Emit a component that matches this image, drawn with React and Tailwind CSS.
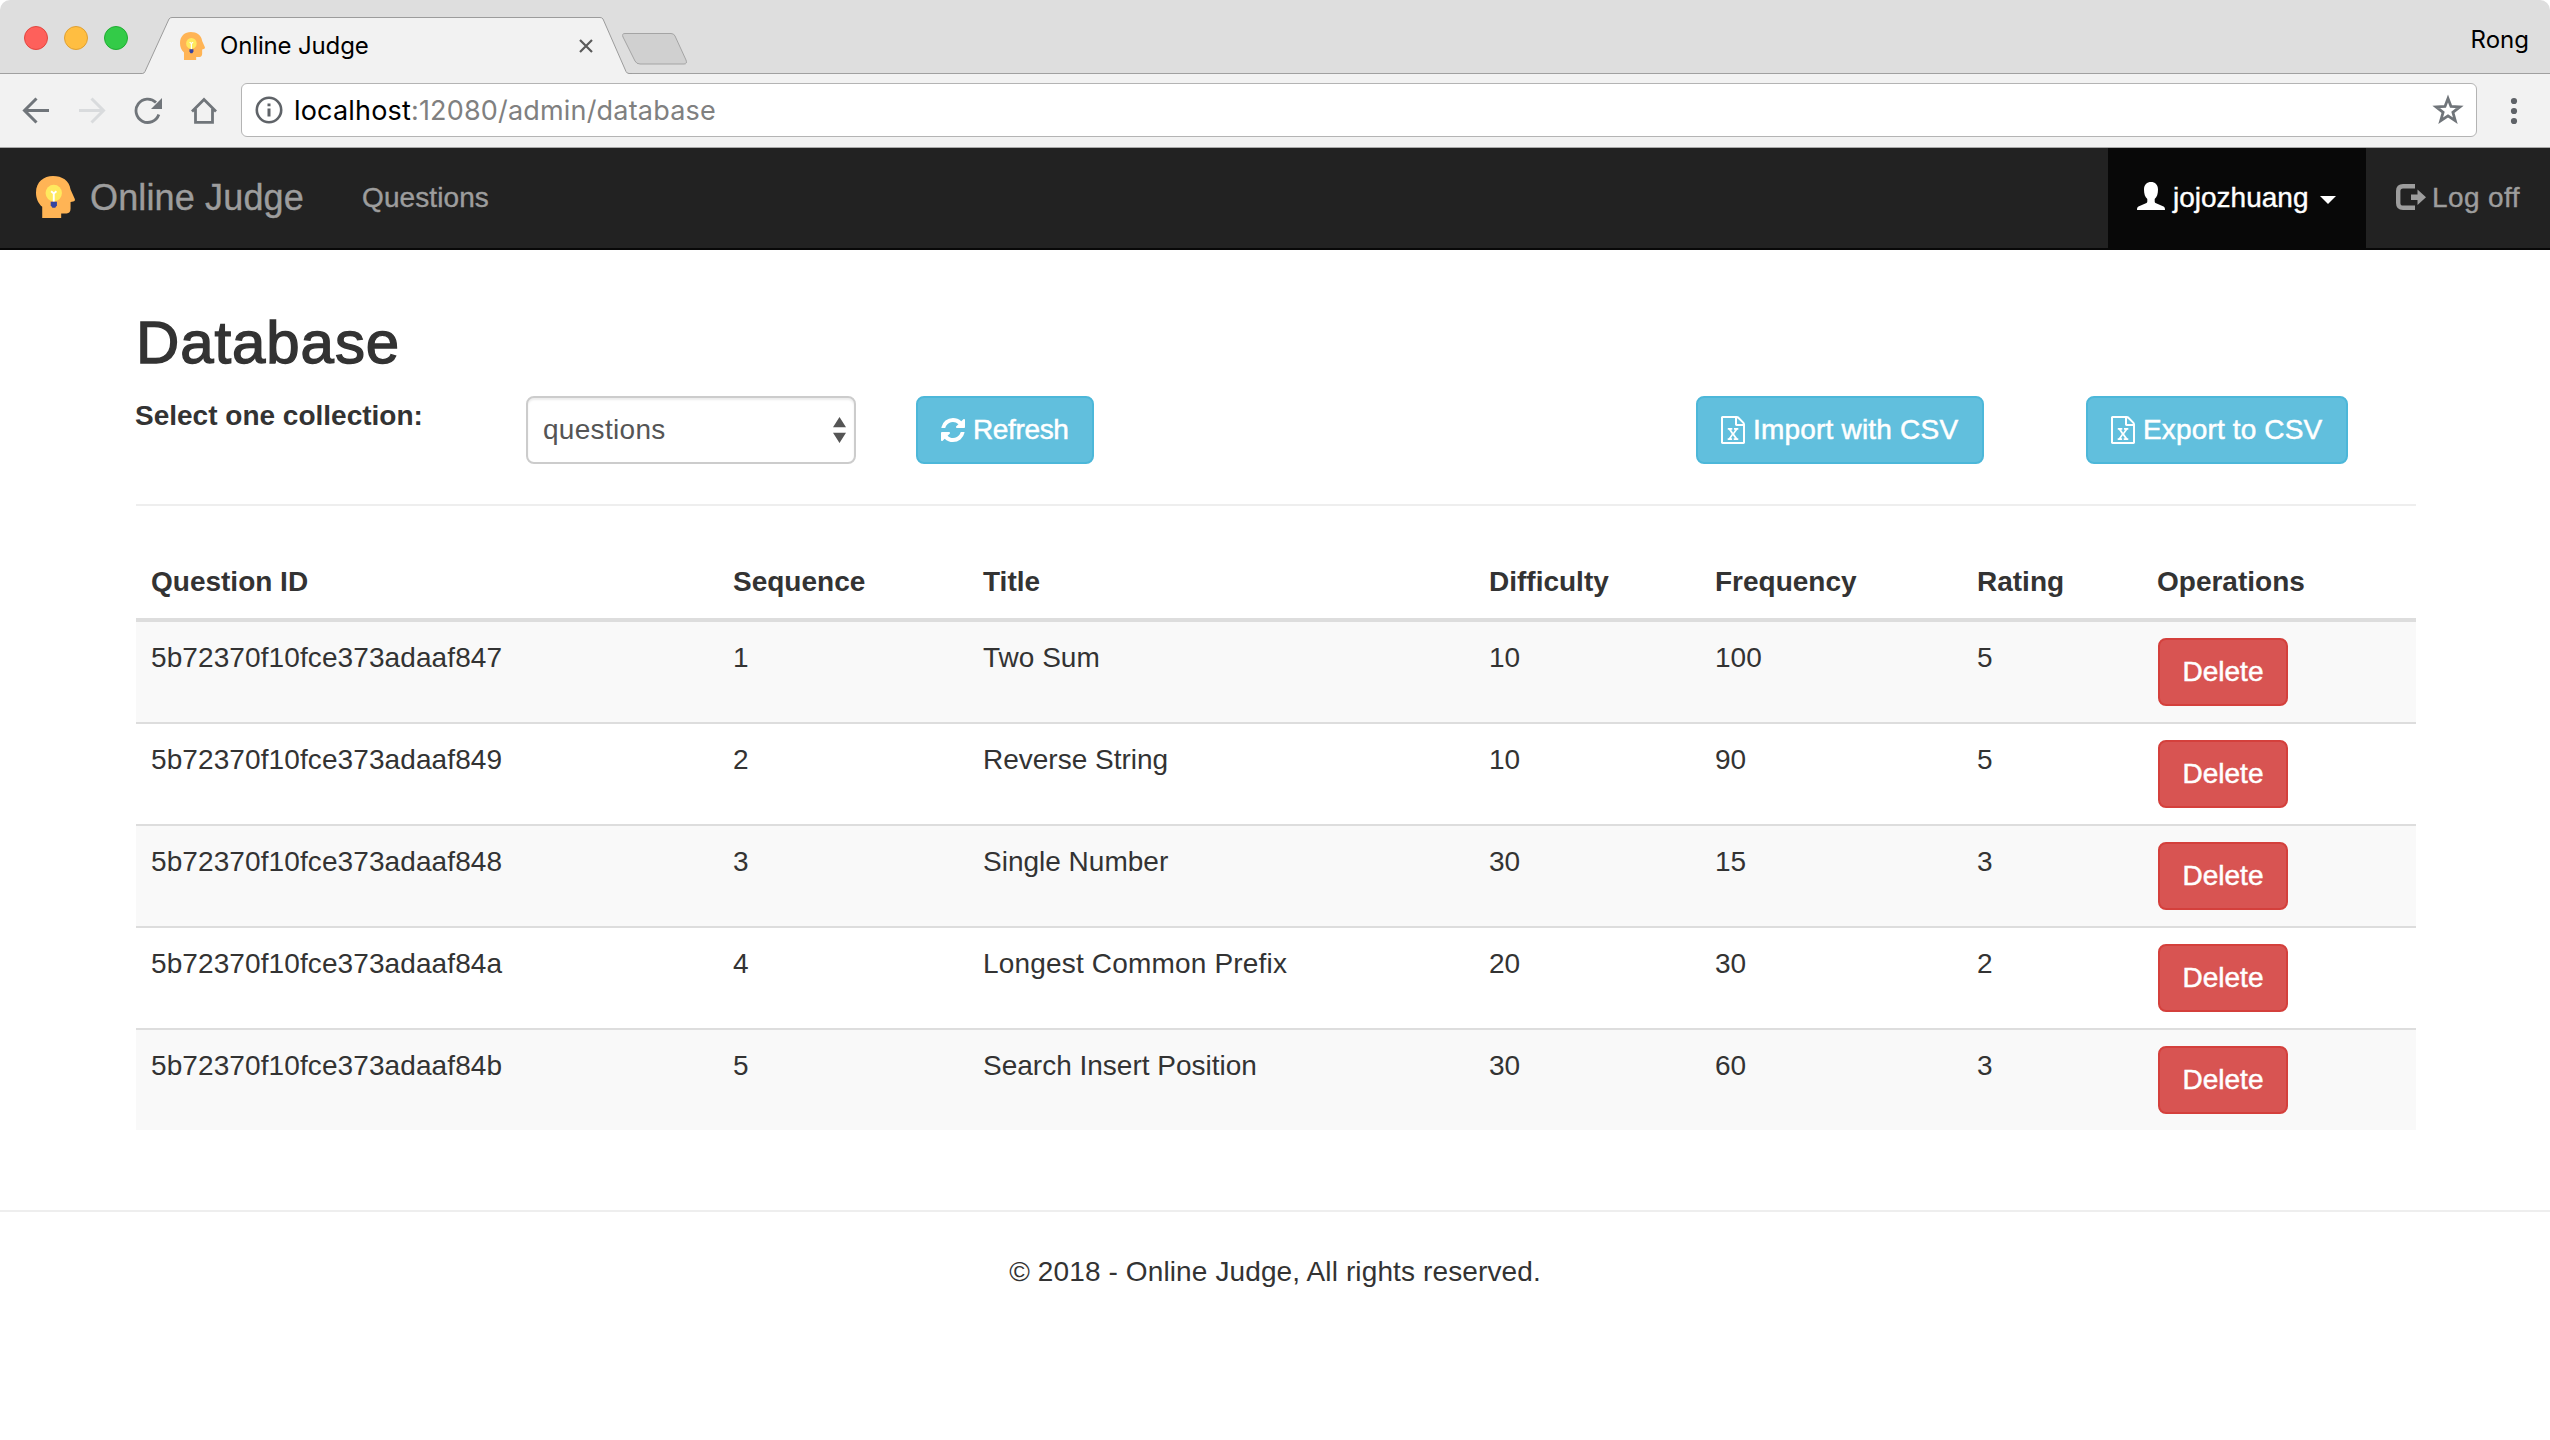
const rows = [
  ['5b72370f10fce373adaaf847', '1', 'Two Sum', '10', '100', '5'],
  ['5b72370f10fce373adaaf849', '2', 'Reverse String', '10', '90', '5'],
  ['5b72370f10fce373adaaf848', '3', 'Single Number', '30', '15', '3'],
  ['5b72370f10fce373adaaf84a', '4', 'Longest Common Prefix', '20', '30', '2'],
  ['5b72370f10fce373adaaf84b', '5', 'Search Insert Position', '30', '60', '3'],
];

const columns = ['Question ID', 'Sequence', 'Title', 'Difficulty', 'Frequency', 'Rating', 'Operations'];

const rowGrid = 'grid grid-cols-[582px_250px_506px_226px_262px_180px_274px]';

function HeadLogo({ className }) {
  return (
    <svg className={className} viewBox="0 0 39.5 42.3" preserveAspectRatio="none">
      <path
        fill="#ffb455"
        d="M6.3 42.3V31C2 27 0 22.5 0 16.5 0 6 8 0 17.2 0S33.7 4.500 35 13.500L39.200 22.800C39.800 24.300 39.200 25.400 37.700 25.800L35 26.300V33C35 36 33.500 37.700 31 37.700H25.500V42.300Z"
      />
      <circle cx="18" cy="17.200" r="8.300" fill="#ffe95e" />
      <path d="M15.300 15.300L18 17.600L20.700 15.300M18 17.300V26" fill="none" stroke="#fff" strokeWidth="1.900" />
      <path d="M14.900 26H21.200V29.500L19.500 32H16.600L14.900 29.500Z" fill="#3644a0" />
    </svg>
  );
}

function RefreshIcon() {
  return (
    <svg className="size-6 shrink-0" viewBox="0 0 1536 1536" fill="currentColor">
      <path d="M1511 928q0 5-1 7-64 268-268 434.500t-478 166.500q-146 0-282.500-55t-243.500-157l-129 129q-19 19-45 19t-45-19-19-45v-448q0-26 19-45t45-19h448q26 0 45 19t19 45-19 45l-137 137q71 66 161 102t187 36q134 0 250-65t186-179q11-17 53-117 8-23 30-23h192q13 0 22.500 9.500t9.500 22.500zm25-800v448q0 26-19 45t-45 19h-448q-26 0-45-19t-19-45 19-45l138-138q-148-137-349-137-134 0-250 65t-186 179q-11 17-53 117-8 23-30 23h-199q-13 0-22.500-9.500t-9.500-22.500v-7q65-268 270-434.500t480-166.500q146 0 284 55.500t245 156.500l130-129q19-19 45-19t45 19 19 45z" />
    </svg>
  );
}

function ExcelIcon() {
  return (
    <svg className="h-7 w-6 shrink-0" viewBox="128 0 1536 1792" fill="currentColor">
      <path d="M1596 380q28 28 48 76t20 88v1152q0 40-28 68t-68 28h-1344q-40 0-68-28t-28-68v-1600q0-40 28-68t68-28h896q40 0 88 20t76 48zm-444-244v376h376q-10-29-22-41l-313-313q-12-12-41-22zm384 1528v-1024h-416q-40 0-68-28t-28-68v-416h-768v1536h1280zm-979-234v106h281v-106h-75l103-161q5-7 10-16.500t7.500-13.500 3.500-4h2q1 4 5 10 2 4 4.500 7.500t6 8 6.500 8.500l107 161h-76v106h291v-106h-68l-192-273 195-282h67v-107h-279v107h74l-103 159q-4 7-10 16.500t-9 13.500l-2 3h-2q-1-4-5-10-6-11-17-23l-106-159h76v-107h-290v107h68l189 272-194 283h-68z" />
    </svg>
  );
}

function TabStrip() {
  return (
    <div className="flex h-[74px] items-start rounded-t-[10px] border-b border-[#a0a0a0] bg-[#dedede] font-[Inter,sans-serif] text-[24px] text-black">
      <div className="mt-[26px] ml-6 flex w-[104px] shrink-0 gap-4">
        <span className="size-6 rounded-full border border-[#e2463f] bg-[#fe605b]" />
        <span className="size-6 rounded-full border border-[#dfa033] bg-[#ffbe41]" />
        <span className="size-6 rounded-full border border-[#1fad32] bg-[#33cb48]" />
      </div>
      <div className="relative ml-3 h-[74px] w-[492px] shrink-0">
        <svg className="absolute inset-0 h-[74px] w-[492px]" viewBox="0 0 492 74">
          <path d="M0 73.500H2.500Q4 73.500 5 71.500L29 19Q30 17.500 32 17.500H460Q462 17.500 463 19L486 71.500Q487 73.500 489 73.500H492V74H0Z" fill="#f2f2f2" />
          <path d="M0 73.500H2.500Q4 73.500 5 71.500L29 19Q30 17.500 32 17.500H460Q462 17.500 463 19L486 71.500Q487 73.500 489 73.500H492" fill="none" stroke="#9c9c9c" />
          <path d="M5 74H486.500" stroke="#f2f2f2" strokeWidth="2" />
        </svg>
        <div className="relative flex items-center pt-[30px] pl-10">
          <HeadLogo className="h-[28px] w-[25px]" />
          <span className="ml-[15px] w-[359px] leading-[32px] tracking-[-0.15px]">Online Judge</span>
          <svg className="size-[14px]" viewBox="0 0 14 14">
            <path d="M1 1L13 13M13 1L1 13" stroke="#5a5a5a" strokeWidth="2.200" />
          </svg>
        </div>
      </div>
      <svg className="mt-[32px] -ml-[10px] h-[34px] w-[66px]" viewBox="0 0 66 34">
        <path d="M3 1.500H49Q52 1.500 53 4L64 28Q65.500 32 62 32H18Q14.500 32 13 29L1 5Q-.5 1.500 3 1.500Z" fill="#d0d0d0" stroke="#a4a4a4" />
      </svg>
      <span className="mt-[25px] mr-[21px] ml-auto leading-[30px]">Rong</span>
    </div>
  );
}

function Toolbar() {
  return (
    <div className="flex h-[74px] items-center border-b border-[#a9a9a9] bg-[#f2f2f2] pl-[22px] font-[Inter,sans-serif] text-[#70757a]">
      <svg className="size-7 shrink-0" viewBox="0 0 28 28" fill="none" stroke="currentColor" strokeWidth="3">
        <path d="M27 13.500H3M14.500 1.500L2.500 13.500L14.500 25.500" />
      </svg>
      <svg className="ml-7 size-7 shrink-0" viewBox="0 0 28 28" fill="none" stroke="#d9dbdd" strokeWidth="3">
        <path d="M1 13.500H25M13.500 1.500L25.500 13.500L13.500 25.500" />
      </svg>
      <svg className="ml-7 size-7 shrink-0" viewBox="0 0 28 28">
        <path d="M24.800 17.500A11.700 11.700 0 1 1 22 5.500" fill="none" stroke="currentColor" strokeWidth="2.800" />
        <path d="M28 1V12H17Z" fill="currentColor" />
      </svg>
      <svg className="ml-7 size-7 shrink-0" viewBox="0 0 28 28" fill="none" stroke="currentColor" strokeWidth="2.800">
        <path d="M2 14.500L14 2.500L26 14.500M5.500 12V25.300H22.500V12" />
      </svg>
      <div className="-mt-px ml-[23px] flex h-[54px] w-[2236px] shrink-0 items-center rounded-md border border-[#b4b4b4] bg-white pr-[12px] pl-[13px]">
        <svg className="size-7 shrink-0" viewBox="0 0 28 28">
          <circle cx="14" cy="14" r="12.200" fill="none" stroke="#5f6368" strokeWidth="2.600" />
          <path d="M12.500 12.500H15.500V20.500H12.500ZM12.500 7.500H15.500V10.300H12.500Z" fill="#5f6368" />
        </svg>
        <span className="mt-px ml-[11px] text-[27px] leading-[40px] tracking-[0.18px] text-[#808080]">
          <span className="text-black">localhost</span>:12080/admin/database
        </span>
        <svg className="ml-auto size-[32px] shrink-0" viewBox="0 0 32 32">
          <path d="M16 4.500L19 12.500L27.800 12.900L20.900 18.300L23.300 26.700L16 21.900L8.700 26.700L11.100 18.300L4.200 12.900L13 12.500Z" fill="none" stroke="currentColor" strokeWidth="2.800" />
        </svg>
      </div>
      <svg className="ml-[33px] h-7 w-2" viewBox="0 0 8 28" fill="#5f6368">
        <circle cx="4" cy="4" r="3.100" />
        <circle cx="4" cy="14" r="3.100" />
        <circle cx="4" cy="24" r="3.100" />
      </svg>
    </div>
  );
}

function Navbar() {
  return (
    <nav className="flex h-[102px] items-stretch border-b-2 border-[#080808] bg-[#222] pl-9 text-[28px] leading-[40px] text-[#9d9d9d] [-webkit-text-stroke:0.4px_currentColor]">
      <a className="flex w-[326px] items-center">
        <HeadLogo className="-mt-[3px] h-[42px] w-[39px]" />
        <span className="ml-[15px] text-[36px] tracking-[0.15px]">Online Judge</span>
      </a>
      <a className="flex items-center tracking-[0.1px]">Questions</a>
      <a className="ml-auto flex w-[258px] items-center bg-[#080808] pl-[29px] text-white">
        <svg className="-mt-[4px] size-7" viewBox="0 0 28 28" fill="currentColor" stroke="none">
          <path d="M7 7.500C7 2.500 10 0 14 0s7 2.500 7 7.500c0 4.500-1 7.500-3.300 9.500v2.300c0 1 .4 1.600 1.400 2l6.900 3c1.500.7 2 1.500 2 3.700H0c0-2.200.5-3 2-3.700l6.900-3c1-.4 1.400-1 1.400-2V17C8 15 7 12 7 7.500Z" />
        </svg>
        <span className="ml-[8px]">jojozhuang</span>
        <svg className="mt-[4px] ml-[12px] h-2 w-4" viewBox="0 0 16 8" fill="currentColor">
          <path d="M0 0H16L8 8Z" />
        </svg>
      </a>
      <a className="flex w-[184px] items-center pl-[30px]">
        <svg className="-mt-[2px] h-[26px] w-[30px]" viewBox="0 0 30 26">
          <path d="M19 2.200H7Q2.200 2.200 2.200 7V19Q2.200 23.800 7 23.800H19" fill="none" stroke="currentColor" strokeWidth="4.400" />
          <path d="M15 10.500H21.500V5.500L30 13.200L21.500 21V16H15Z" fill="currentColor" />
        </svg>
        <span className="ml-[6px] tracking-[0.4px]">Log off</span>
      </a>
    </nav>
  );
}

function InfoButton({ icon, children, className }) {
  return (
    <button className={`flex h-[68px] shrink-0 items-center rounded-lg border-2 border-[#4cb7d9] bg-[#61bfdd] pl-[23px] leading-[40px] whitespace-nowrap text-white [-webkit-text-stroke:0.5px_currentColor] ${className}`}>
      {icon}
      <span className="ml-[8px]">{children}</span>
    </button>
  );
}

export default function App() {
  return (
    <div className="h-[1440px] w-[2550px] overflow-hidden bg-white font-['Liberation_Sans',Arial,sans-serif] text-[28px] leading-[40px] text-[#333]">
      <TabStrip />
      <Toolbar />
      <Navbar />
      <main className="mr-[134px] ml-[136px] pt-[59px]">
        <h2 className="h-[87px] pt-px text-[60px] leading-[66px] font-normal tracking-[0.9px] [-webkit-text-stroke:1.4px_#333]">Database</h2>
        <div className="flex h-[108px] items-start">
          <label className="-ml-px w-[391px] font-bold">Select one collection:</label>
          <div className="flex h-[68px] w-[330px] shrink-0 items-center justify-between rounded-lg border-2 border-[#ccc] pr-[8px] pl-[15px] text-[#555] shadow-[inset_0_2px_2px_rgba(0,0,0,0.075)]">
            <span className="tracking-[0.3px]">questions</span>
            <svg className="h-[26px] w-[13px]" viewBox="0 0 13 26" fill="#555">
              <path d="M0 10.300L6.500 0L13 10.300ZM0 15.700H13L6.500 26Z" />
            </svg>
          </div>
          <InfoButton className="ml-[60px] w-[178px] tracking-[-0.35px]" icon={<RefreshIcon />}>Refresh</InfoButton>
          <InfoButton className="ml-[602px] w-[288px] tracking-[0.2px]" icon={<ExcelIcon />}>Import with CSV</InfoButton>
          <InfoButton className="ml-[102px] w-[262px] tracking-[0.15px]" icon={<ExcelIcon />}>Export to CSV</InfoButton>
        </div>
        <hr className="border-t-2 border-[#eee]" />
        <div className="mt-[56px] pb-[80px]">
          <div className={`${rowGrid} h-[60px] border-b-4 border-[#ddd] font-bold`}>
            {columns.map((name) => (
              <div key={name} className="pl-[15px]">{name}</div>
            ))}
          </div>
          {rows.map((row, index) => (
            <div
              key={row[0]}
              className={`${rowGrid} ${index === 0 ? 'h-[100px] pt-4' : 'h-[102px] border-t-2 border-[#ddd] pt-4'} ${index % 2 === 0 ? 'bg-[#f9f9f9]' : 'bg-white'}`}
            >
              {row.map((value, cell) => (
                <div
                  key={columns[cell]}
                  className={`pl-[15px] ${cell === 0 ? 'tracking-[0.1px]' : ''} ${value === 'Longest Common Prefix' ? 'tracking-[0.18px]' : ''}`}
                >
                  {value}
                </div>
              ))}
              <div className="pl-4">
                <button className="flex h-[68px] w-[130px] items-center justify-center rounded-lg border-2 border-[#d4403c] bg-[#d85452] text-white [-webkit-text-stroke:0.5px_currentColor]">
                  Delete
                </button>
              </div>
            </div>
          ))}
        </div>
      </main>
      <footer className="border-t-2 border-[#eee] pt-[40px] text-center tracking-[0.12px]">© 2018 - Online Judge, All rights reserved.</footer>
    </div>
  );
}
